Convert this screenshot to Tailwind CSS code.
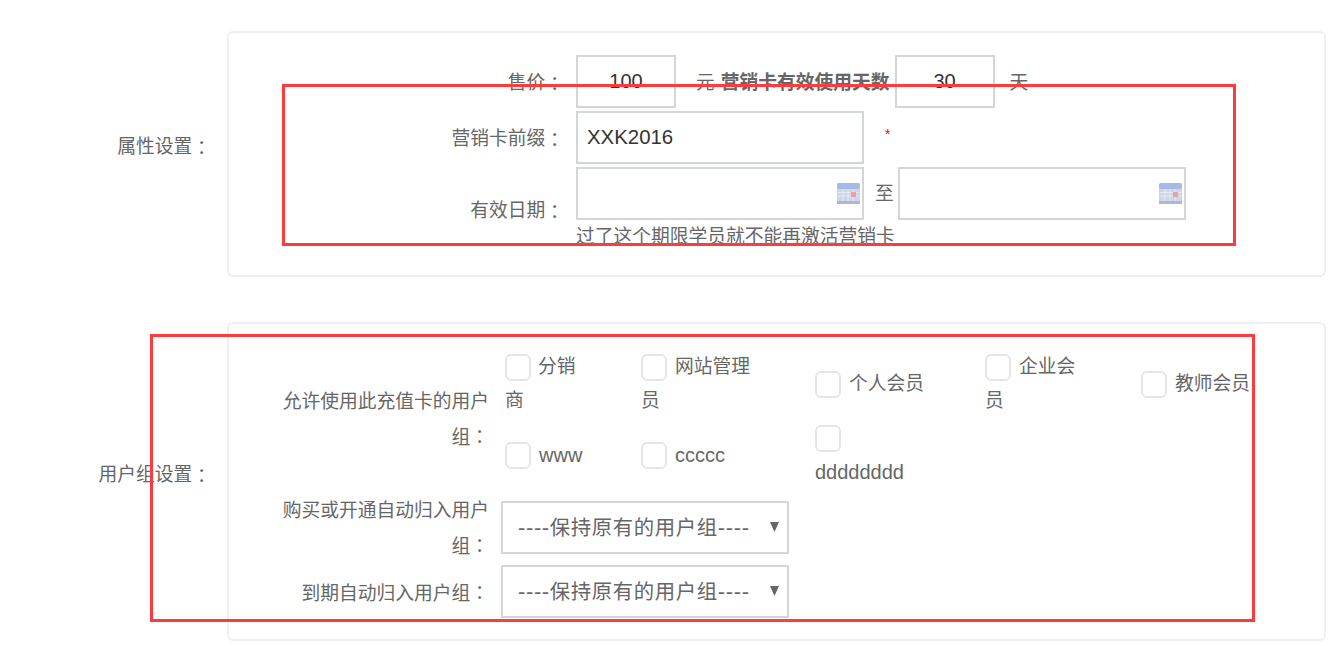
<!DOCTYPE html>
<html lang="en">
<head>
    <meta charset="UTF-8">
    <title>营销卡设置</title>
    <script src="https://cdn.jsdelivr.net/npm/@tailwindcss/browser@4"></script>
</head>
<body class="bg-white overflow-hidden">
    <div class="relative h-[646px] overflow-hidden pt-[31px] font-['Liberation_Sans','Noto_Sans_CJK_SC',sans-serif] text-[18.75px] leading-[34px] text-[#666]">

        <!-- 属性设置 -->
        <section class="flex">
            <div class="w-[227px] shrink-0 flex items-center justify-end pr-[16px] pb-[14px]">属性设置<span class="font-['Noto_Sans_CJK_TC']">：</span></div>
            <div class="w-[1099px] h-[246px] border-2 border-[#eef0f0] rounded-md pt-[22px]">
                <div class="flex">
                    <div class="w-[335px] flex items-center justify-end pt-[2px]">售价<span class="font-['Noto_Sans_CJK_TC']">：</span></div>
                    <input value="100" class="ml-[12px] w-[100px] h-[53px] border-2 border-[#d2d6d8] text-center text-[20px] text-[#333]">
                    <div class="flex items-center ml-[20px] pt-[2px]">元<b class="ml-[6px]">营销卡有效使用天数</b></div>
                    <input value="30" class="ml-[5px] w-[100px] h-[53px] border-2 border-[#d2d6d8] text-center text-[20px] text-[#333]">
                    <div class="flex items-center ml-[15px] pt-[2px]">天</div>
                </div>
                <div class="flex mt-[3px]">
                    <div class="w-[335px] flex items-center justify-end pt-[2px]">营销卡前缀<span class="font-['Noto_Sans_CJK_TC']">：</span></div>
                    <input value="XXK2016" class="ml-[12px] w-[288px] h-[53px] border-2 border-[#d2d6d8] px-[9px] text-[20.4px] text-[#333]">
                    <div class="ml-[21px] mt-[6px] text-[14px] leading-[34px] text-[#f00]">*</div>
                </div>
                <div class="flex mt-[3px]">
                    <div class="w-[335px] flex items-center justify-end pt-[2px]">有效日期<span class="font-['Noto_Sans_CJK_TC']">：</span></div>
                    <div class="ml-[12px]">
                        <div class="flex items-center">
                            <div class="relative w-[288px] h-[53px] border-2 border-[#d2d6d8]">
                                <svg class="absolute right-[2px] top-[14px]" width="23" height="21" viewBox="0 0 23 21">
                                    <rect width="23" height="21" rx="2" fill="#ccd6e8"/>
                                    <rect width="23" height="6" rx="2" fill="#a5bbe6"/>
                                    <rect y="18" width="23" height="3" fill="#aeb8ca"/>
                                    <path d="M1 9.5h21M1 13h21M6 6v12M11 6v12M16 6v12" stroke="#e6ebf3" stroke-width="1"/>
                                    <rect x="14" y="9" width="5" height="5" fill="#e8a49c"/>
                                </svg>
                            </div>
                            <span class="ml-[11px]">至</span>
                            <div class="relative ml-[4px] w-[288px] h-[53px] border-2 border-[#d2d6d8]">
                                <svg class="absolute right-[2px] top-[14px]" width="23" height="21" viewBox="0 0 23 21">
                                    <rect width="23" height="21" rx="2" fill="#ccd6e8"/>
                                    <rect width="23" height="6" rx="2" fill="#a5bbe6"/>
                                    <rect y="18" width="23" height="3" fill="#aeb8ca"/>
                                    <path d="M1 9.5h21M1 13h21M6 6v12M11 6v12M16 6v12" stroke="#e6ebf3" stroke-width="1"/>
                                    <rect x="14" y="9" width="5" height="5" fill="#e8a49c"/>
                                </svg>
                            </div>
                        </div>
                        <div class="h-[25px] mb-[8px] overflow-hidden">过了这个期限学员就不能再激活营销卡</div>
                    </div>
                </div>
            </div>
        </section>

        <!-- 用户组设置 -->
        <section class="flex mt-[45px]">
            <div class="w-[227px] shrink-0 flex items-center justify-end pr-[16px] pb-[14px]">用户组设置<span class="font-['Noto_Sans_CJK_TC']">：</span></div>
            <div class="w-[1099px] h-[319px] border-2 border-[#eef0f0] rounded-md pt-[26px]">
                <div class="flex">
                    <div class="w-[260px] self-center text-right">
                        <div>允许使用此充值卡的用户</div>
                        <div>组<span class="font-['Noto_Sans_CJK_TC']">：</span></div>
                    </div>
                    <div class="ml-[16px] grid grid-cols-[136px_174px_170px_156px_112px] grid-rows-[68px_68px] gap-y-[3px] items-center">
                        <label class="w-[80px]"><input type="checkbox" class="appearance-none align-middle w-[26px] h-[27px] mr-[7px] mb-[2px] border-2 border-[#e3e6e6] rounded-md">分销商</label>
                        <label class="w-[115px]"><input type="checkbox" class="appearance-none align-middle w-[26px] h-[27px] mr-[8px] mb-[2px] border-2 border-[#e3e6e6] rounded-md">网站管理员</label>
                        <label class="w-[114px]"><input type="checkbox" class="appearance-none align-middle w-[26px] h-[27px] mr-[8px] mb-[2px] border-2 border-[#e3e6e6] rounded-md">个人会员</label>
                        <label class="w-[100px]"><input type="checkbox" class="appearance-none align-middle w-[26px] h-[27px] mr-[8px] mb-[2px] border-2 border-[#e3e6e6] rounded-md">企业会员</label>
                        <label class="w-[114px]"><input type="checkbox" class="appearance-none align-middle w-[26px] h-[27px] mr-[8px] mb-[2px] border-2 border-[#e3e6e6] rounded-md">教师会员</label>
                        <label class="w-[80px] text-[20px]"><input type="checkbox" class="appearance-none align-middle w-[26px] h-[27px] mr-[8px] mb-[2px] border-2 border-[#e3e6e6] rounded-md">www</label>
                        <label class="w-[115px] text-[20px]"><input type="checkbox" class="appearance-none align-middle w-[26px] h-[27px] mr-[8px] mb-[2px] border-2 border-[#e3e6e6] rounded-md">ccccc</label>
                        <label class="w-[114px] text-[20px]"><input type="checkbox" class="appearance-none align-middle w-[26px] h-[27px] mr-[8px] mb-[2px] border-2 border-[#e3e6e6] rounded-md">dddddddd</label>
                    </div>
                </div>
                <div class="flex mt-[5px]">
                    <div class="w-[260px] self-center text-right">
                        <div>购买或开通自动归入用户</div>
                        <div>组<span class="font-['Noto_Sans_CJK_TC']">：</span></div>
                    </div>
                    <div class="relative ml-[12px] mt-[7px] w-[288px] h-[53px]">
                        <select class="appearance-none w-full h-full border-2 border-[#d2d6d8] pl-[15px] font-['DejaVu_Sans','Noto_Sans_CJK_SC',sans-serif] text-[20.4px] tracking-[0.6px] text-[#666]">
                            <option>----保持原有的用户组----</option>
                        </select>
                        <svg class="absolute right-[10px] top-[21px]" width="9" height="10" viewBox="0 0 9 10"><path d="M0 0h9L4.5 10z" fill="#666"/></svg>
                    </div>
                </div>
                <div class="flex mt-[1px]">
                    <div class="w-[260px] self-center text-right pt-[2px]">到期自动归入用户组<span class="font-['Noto_Sans_CJK_TC']">：</span></div>
                    <div class="relative ml-[12px] w-[288px] h-[53px]">
                        <select class="appearance-none w-full h-full border-2 border-[#d2d6d8] pl-[15px] font-['DejaVu_Sans','Noto_Sans_CJK_SC',sans-serif] text-[20.4px] tracking-[0.6px] text-[#666]">
                            <option>----保持原有的用户组----</option>
                        </select>
                        <svg class="absolute right-[10px] top-[21px]" width="9" height="10" viewBox="0 0 9 10"><path d="M0 0h9L4.5 10z" fill="#666"/></svg>
                    </div>
                </div>
            </div>
        </section>

        <!-- red annotation boxes drawn over the screenshot -->
        <div class="absolute left-[282px] top-[84px] w-[954px] h-[162px] border-[3px] border-[#ff3b3b] pointer-events-none"></div>
        <div class="absolute left-[150px] top-[334px] w-[1105px] h-[288px] border-[3px] border-[#ff3b3b] pointer-events-none"></div>
    </div>
</body>
</html>
